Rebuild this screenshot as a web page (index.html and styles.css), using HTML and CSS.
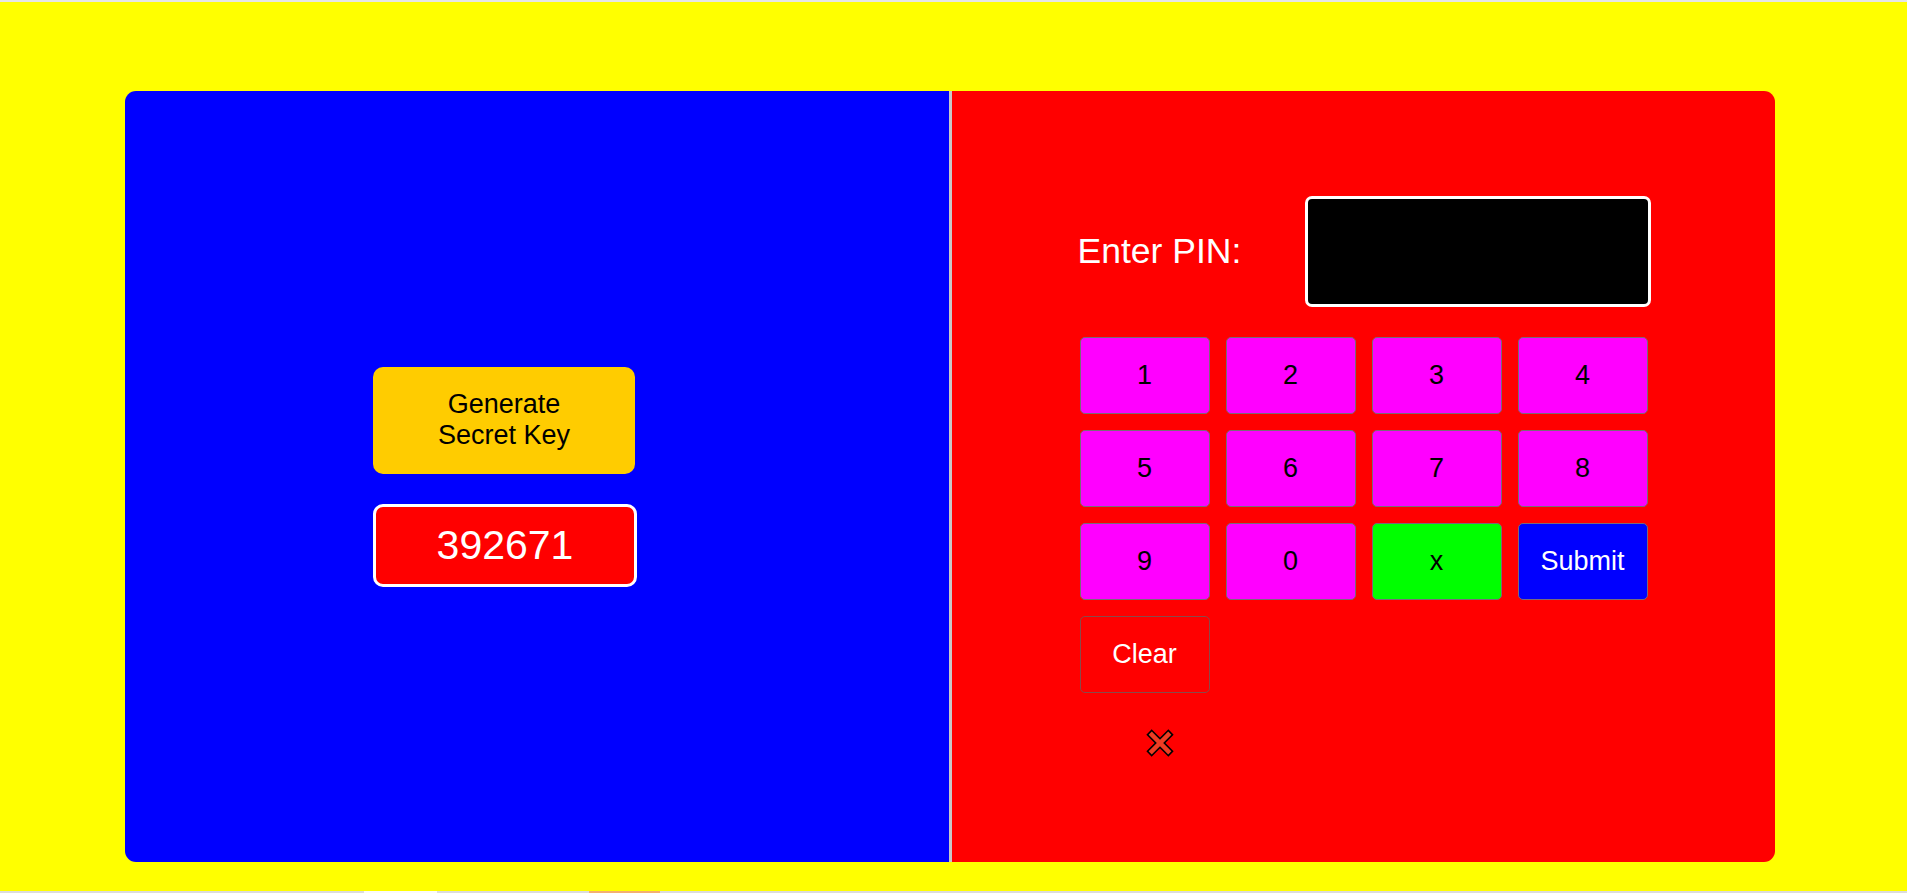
FILE: index.html
```html
<!DOCTYPE html>
<html lang="en">
<head>
<meta charset="utf-8">
<title>PIN Matcher</title>
<link rel="stylesheet" href="styles.css">
</head>
<body>
<div class="topbar"></div>
<main class="stage">
  <section class="card">
    <div class="left">
      <button class="generate">Generate<br>Secret Key</button>
      <div class="secret">392671</div>
    </div>
    <div class="right">
      <div class="pin-row">
        <label class="pin-label">Enter PIN:</label>
        <div class="pin-input"></div>
      </div>
      <div class="keypad">
        <button class="key">1</button>
        <button class="key">2</button>
        <button class="key">3</button>
        <button class="key">4</button>
        <button class="key">5</button>
        <button class="key">6</button>
        <button class="key">7</button>
        <button class="key">8</button>
        <button class="key">9</button>
        <button class="key">0</button>
        <button class="key key-back">x</button>
        <button class="key key-submit">Submit</button>
        <button class="key key-clear">Clear</button>
      </div>
      <div class="status">
        <svg class="cross" width="28" height="28" viewBox="0 0 28 28">
          <line x1="3" y1="3" x2="25" y2="25" stroke="#000" stroke-width="7.5"/>
          <line x1="25" y1="3" x2="3" y2="25" stroke="#000" stroke-width="7.5"/>
          <line x1="4.2" y1="4.2" x2="23.8" y2="23.8" stroke="#ee3d24" stroke-width="4.5"/>
          <line x1="23.8" y1="4.2" x2="4.2" y2="23.8" stroke="#ee3d24" stroke-width="4.5"/>
        </svg>
      </div>
    </div>
  </section>
</main>
<div class="bottombar">
  <span class="seg seg-white"></span>
  <span class="seg seg-orange"></span>
</div>
</body>
</html>
```
FILE: styles.css
```css
* {
  box-sizing: border-box;
}

html, body {
  margin: 0;
  padding: 0;
  height: 893px;
  overflow: hidden;
  background: #e6e6e6;
  font-family: "Liberation Sans", Arial, sans-serif;
}

.topbar {
  height: 2px;
  background: #e6e6e6;
}

.stage {
  height: 889px;
  background: #ffff00;
  padding-top: 89px;
  padding-left: 125px;
}

.card {
  display: flex;
  width: 1650px;
  height: 771px;
  border-radius: 11px;
  overflow: hidden;
}

.left {
  width: 827px;
  background: #0000ff;
  border-right: 3px solid #c8c8c8;
  padding-right: 64px;
  display: flex;
  flex-direction: column;
  align-items: center;
  justify-content: center;
}

.generate {
  width: 262px;
  height: 107px;
  border: none;
  border-radius: 10px;
  background: #ffcc00;
  color: #000;
  font-family: "Liberation Sans", Arial, sans-serif;
  font-size: 27px;
  line-height: 31px;
  padding: 0;
  margin-left: -2px;
}

.secret {
  margin-top: 30px;
  width: 264px;
  height: 83px;
  border: 3px solid #ffffff;
  border-radius: 10px;
  background: #ff0000;
  color: #ffffff;
  font-size: 41px;
  display: flex;
  align-items: center;
  justify-content: center;
}

.right {
  flex: 1;
  background: #ff0000;
  display: flex;
  flex-direction: column;
  align-items: center;
  justify-content: center;
  padding-bottom: 1px;
}

.pin-row {
  width: 574px;
  display: flex;
  align-items: center;
  justify-content: space-between;
}

.pin-label {
  color: #ffffff;
  font-size: 35.5px;
  margin-left: 1px;
}

.pin-input {
  width: 346px;
  height: 111px;
  background: #000000;
  border: 3px solid #ffffff;
  border-radius: 7px;
}

.keypad {
  margin-top: 30px;
  display: grid;
  grid-template-columns: repeat(4, 130px);
  grid-auto-rows: 77px;
  gap: 16px;
}

.key {
  border: 1.5px solid #7a6a7a;
  border-radius: 5px;
  background: #ff00ff;
  color: #000000;
  font-family: "Liberation Sans", Arial, sans-serif;
  font-size: 27px;
  padding: 0;
}

.key-back {
  background: #00ff00;
}

.key-submit {
  background: #0000ff;
  color: #ffffff;
}

.key-clear {
  background: transparent;
  color: #ffffff;
  border-color: #8a4a4a;
}

.status {
  width: 568px;
  margin-top: 36px;
  padding-left: 66px;
  height: 28px;
  display: flex;
}

.cross {
  display: block;
}

.bottombar {
  height: 2px;
  background: #dcdcdc;
  display: flex;
}

.seg {
  height: 2px;
  display: block;
}

.seg-white {
  width: 73px;
  margin-left: 364px;
  background: #fafafa;
}

.seg-orange {
  width: 71px;
  margin-left: 152px;
  background: #f4b070;
}
```
